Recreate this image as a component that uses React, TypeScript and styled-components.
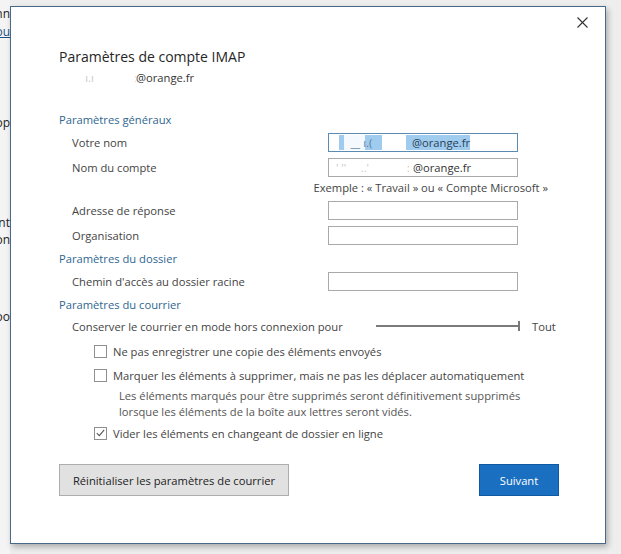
import React from 'react';
import styled, { createGlobalStyle } from 'styled-components';

const GlobalStyle = createGlobalStyle`
  html, body {
    margin: 0;
    padding: 0;
    background: #eeeeee;
  }
  body {
    font-family: "Open Sans", "Noto Sans", sans-serif;
  }
`;

const Desktop = styled.div`
  width: 621px;
  height: 554px;
  display: flex;
  align-items: flex-start;
  background: #eeeeee;
  overflow: hidden;
`;

// window lying behind the dialog, only a thin strip of it shows
const BackWindow = styled.div`
  width: 10px;
  height: 554px;
  flex: none;
  background: #f4f4f4;
  display: flex;
  flex-direction: column;
  font-size: 12px;
  line-height: 16px;
  color: #222;
`;

const Fragment = styled.div<{ $top: number; $link?: boolean }>`
  margin-top: ${p => p.$top}px;
  display: flex;
  justify-content: flex-end;
  white-space: nowrap;
  overflow: hidden;
  color: ${p => (p.$link ? '#1a4f86' : '#222')};
  text-decoration: ${p => (p.$link ? 'underline' : 'none')};
`;

const Dialog = styled.div`
  margin-top: 6px;
  width: 596px;
  height: 538px;
  box-sizing: border-box;
  flex: none;
  background: #ffffff;
  border: 1px solid #48698a;
  box-shadow: 2px 3px 6px rgba(0, 0, 0, 0.28);
  display: flex;
  flex-direction: column;
`;

const Header = styled.div`
  height: 40px;
  display: flex;
  justify-content: flex-end;
  align-items: flex-start;
  padding-right: 17px;
`;

const CloseButton = styled.button`
  margin-top: 10px;
  width: 11px;
  height: 11px;
  padding: 0;
  border: none;
  background: none;
  display: flex;
`;

const Body = styled.div`
  display: flex;
  flex-direction: column;
  padding: 0 46px 0 48px;
  font-size: 11.2px;
  color: #444;
`;

const Title = styled.div`
  font-size: 14px;
  line-height: 20px;
  color: #262626;
`;

const Account = styled.div`
  line-height: 20px;
  color: #333;
  margin-top: 1px;
  display: flex;
  align-items: center;
`;

// obscured part of an address, as in the screenshot
const Masked = styled.span<{ $width: number; $selected?: boolean }>`
  display: inline-block;
  width: ${p => p.$width}px;
  overflow: hidden;
  white-space: nowrap;
  color: ${p => (p.$selected ? '#5d7f9c' : '#c9c9c9')};
  background: ${p =>
    p.$selected
      ? 'linear-gradient(90deg, #ffffff 0 8%, #9fcbef 8% 14%, #f4f9fd 14% 40%, #9fcbef 40% 62%, #ffffff 62% 92%, #9fcbef 92% 100%)'
      : '#ffffff'};
`;

const Section = styled.div<{ $gap: number }>`
  margin-top: ${p => p.$gap}px;
  height: 20px;
  line-height: 20px;
  color: #2f6690;
`;

const FormRow = styled.div`
  display: grid;
  grid-template-columns: 256px 190px;
  align-items: center;
  height: 25px;
  padding-left: 13px;
`;

const Field = styled.div<{ $focused?: boolean }>`
  height: 19px;
  box-sizing: border-box;
  border: 1px solid ${p => (p.$focused ? '#5b8bb2' : '#a9a9a9')};
  display: flex;
  align-items: center;
  padding-left: 4px;
  color: #333;
  white-space: nowrap;
  overflow: hidden;
`;

const Selected = styled.span`
  display: flex;
  align-items: center;
  background: #9fcbef;
  color: #2a3f55;
  line-height: 15px;
`;

const Hint = styled.div`
  height: 16px;
  line-height: 16px;
  text-align: right;
  padding-right: 11px;
  margin-bottom: 2px;
`;

const SliderRow = styled.div`
  display: grid;
  grid-template-columns: 304px 144px auto;
  align-items: center;
  height: 22px;
  padding-left: 13px;
`;

const Track = styled.div`
  position: relative;
  height: 2px;
  background: #7a7a7a;

  &::after {
    content: '';
    position: absolute;
    right: 0;
    top: -4px;
    width: 2px;
    height: 10px;
    background: #7a7a7a;
  }
`;

const SliderValue = styled.span`
  padding-left: 12px;
`;

const CheckRow = styled.label<{ $gap?: number }>`
  display: flex;
  align-items: center;
  gap: 6px;
  height: 24px;
  margin-top: ${p => p.$gap ?? 0}px;
  padding-left: 35px;
`;

const Box = styled.span`
  width: 13px;
  height: 13px;
  box-sizing: border-box;
  border: 1px solid #8f8f8f;
  background: #fff;
  display: flex;
  align-items: center;
  justify-content: center;
  flex: none;
`;

const Note = styled.div`
  padding-left: 60px;
  line-height: 16px;
  margin-top: 1px;
  color: #555;
`;

const Buttons = styled.div`
  margin-top: 19px;
  display: flex;
  justify-content: space-between;
`;

const Button = styled.button<{ $primary?: boolean }>`
  height: 32px;
  width: ${p => (p.$primary ? '80px' : '230px')};
  font-family: inherit;
  font-size: 11.2px;
  border: 1px solid ${p => (p.$primary ? '#0f5aa3' : '#adadad')};
  background: ${p => (p.$primary ? '#1a6fc1' : '#e1e1e1')};
  color: ${p => (p.$primary ? '#ffffff' : '#222')};
  padding: 0;
`;

const Check: React.FC<{ checked?: boolean }> = ({ checked }) => (
  <Box>
    {checked && (
      <svg width="9" height="8" viewBox="0 0 9 8">
        <path d="M0.8 4.2 L3.3 6.6 L8.2 0.8" fill="none" stroke="#555" strokeWidth="1.1" />
      </svg>
    )}
  </Box>
);

const sp = '\u00a0';

export default function App() {
  return (
    <Desktop>
      <GlobalStyle />
      <BackWindow>
        <Fragment $top={6}>onn</Fragment>
        <Fragment $top={2} $link>ou</Fragment>
        <Fragment $top={75}>op</Fragment>
        <Fragment $top={84}>ont</Fragment>
        <Fragment $top={1}>ion</Fragment>
        <Fragment $top={61}>oo</Fragment>
      </BackWindow>

      <Dialog>
        <Header>
          <CloseButton aria-label="Fermer">
            <svg width="11" height="11" viewBox="0 0 11 11">
              <path d="M0.5 0.5 L10.5 10.5 M10.5 0.5 L0.5 10.5" stroke="#333" strokeWidth="1.1" />
            </svg>
          </CloseButton>
        </Header>

        <Body>
          <Title>Paramètres de compte IMAP</Title>
          <Account>
            <Masked $width={77}>{`${sp.repeat(9)}ı.ı${sp.repeat(14)}:`}</Masked>@orange.fr
          </Account>

          <Section $gap={22}>Paramètres généraux</Section>
          <FormRow>
            <span>Votre nom</span>
            <Field $focused>
              <Selected>
                <Masked $width={79} $selected>{`${sp.repeat(6)}__${sp}ı.(${sp.repeat(12)}`}</Masked>@orange.fr
              </Selected>
            </Field>
          </FormRow>
          <FormRow>
            <span>Nom du compte</span>
            <Field>
              <Masked $width={80}>{`${sp}'${sp}''${sp.repeat(5)}..'${sp.repeat(13)}:`}</Masked>@orange.fr
            </Field>
          </FormRow>
          <Hint>Exemple : « Travail » ou « Compte Microsoft »</Hint>
          <FormRow>
            <span>Adresse de réponse</span>
            <Field />
          </FormRow>
          <FormRow>
            <span>Organisation</span>
            <Field />
          </FormRow>

          <Section $gap={1}>Paramètres du dossier</Section>
          <FormRow>
            <span>Chemin d'accès au dossier racine</span>
            <Field />
          </FormRow>

          <Section $gap={1}>Paramètres du courrier</Section>
          <SliderRow>
            <span>Conserver le courrier en mode hors connexion pour</span>
            <Track />
            <SliderValue>Tout</SliderValue>
          </SliderRow>
          <CheckRow $gap={2}>
            <Check />
            Ne pas enregistrer une copie des éléments envoyés
          </CheckRow>
          <CheckRow>
            <Check />
            Marquer les éléments à supprimer, mais ne pas les déplacer automatiquement
          </CheckRow>
          <Note>
            Les éléments marqués pour être supprimés seront définitivement supprimés
            <br />
            lorsque les éléments de la boîte aux lettres seront vidés.
          </Note>
          <CheckRow $gap={1}>
            <Check checked />
            Vider les éléments en changeant de dossier en ligne
          </CheckRow>

          <Buttons>
            <Button>Réinitialiser les paramètres de courrier</Button>
            <Button $primary>Suivant</Button>
          </Buttons>
        </Body>
      </Dialog>
    </Desktop>
  );
}
